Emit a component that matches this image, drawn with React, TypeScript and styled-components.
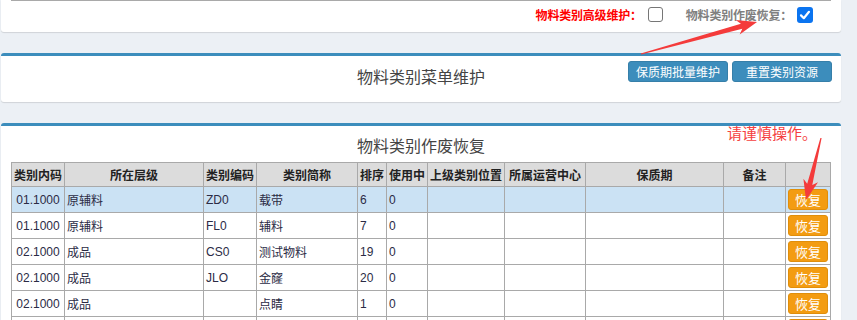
import React from "react";
import styled, { createGlobalStyle } from "styled-components";

const Global = createGlobalStyle`
  html, body { margin: 0; padding: 0; overflow: hidden; }
  body {
    background: #ecf0f5;
    font-family: "Liberation Sans", "Noto Sans CJK SC", sans-serif;
    color: #333;
  }
`;

const Page = styled.div`
  position: relative;
  width: 857px;
  height: 320px;
  overflow: hidden;
`;

const Column = styled.div`
  display: flex;
  flex-direction: column;
  gap: 21px;
  margin-left: 1px;
  width: 840px;
`;

const Box = styled.section<{ $top?: boolean }>`
  background: #fff;
  border-radius: 3px;
  box-shadow: 0 1px 1px rgba(0, 0, 0, 0.12);
  border-top: ${(p) => (p.$top ? "3px solid #3c8dbc" : "none")};
  box-sizing: border-box;
`;

const TopBox = styled(Box)`
  height: 32px;
  border-radius: 0 0 3px 3px;
  padding: 0 10px;
`;

const TableEdge = styled.div`
  height: 1px;
  background: #a9a9a9;
`;

const OptionRow = styled.div`
  display: flex;
  justify-content: flex-end;
  align-items: center;
  padding: 5px 18px 0 0;
  height: 17px;
`;

const OptionLabel = styled.label<{ $red?: boolean }>`
  display: flex;
  align-items: center;
  font-size: 12px;
  font-weight: bold;
  font-family: "Noto Sans CJK SC", sans-serif;
  letter-spacing: -0.2px;
  color: ${(p) => (p.$red ? "#ff0000" : "#808080")};
  margin-left: 23px;
`;

const Check = styled.span<{ $on?: boolean }>`
  display: inline-flex;
  align-items: center;
  justify-content: center;
  box-sizing: border-box;
  width: ${(p) => (p.$on ? "16px" : "15px")};
  height: ${(p) => (p.$on ? "16px" : "15px")};
  margin-left: ${(p) => (p.$on ? "5px" : "6px")};
  border-radius: 3px;
  border: ${(p) => (p.$on ? "none" : "1px solid #767676")};
  background: ${(p) => (p.$on ? "#0b74f0" : "#fff")};
`;

const MenuBox = styled(Box)`
  height: 49px;
  display: grid;
  grid-template-columns: 1fr auto 1fr;
  align-items: start;
`;

const Title = styled.h3<{ $pad: number }>`
  margin: 0;
  padding-top: ${(p) => p.$pad}px;
  font-size: 16px;
  font-weight: normal;
  color: #444;
  line-height: 18px;
  font-family: "Noto Sans CJK SC", sans-serif;
`;

const ButtonBar = styled.div`
  display: flex;
  justify-content: flex-end;
  gap: 4px;
  padding: 5px 9px 0 0;
`;

const BlueButton = styled.button`
  box-sizing: border-box;
  width: 100px;
  height: 21px;
  padding: 0;
  border: 1px solid #367fa9;
  border-radius: 3px;
  background: #3c8dbc;
  color: #fff;
  font-size: 12px;
  font-family: "Noto Sans CJK SC", sans-serif;
  line-height: 19px;
`;

const RecoverBox = styled(Box)`
  height: 260px;
  padding: 0 10px;
`;

const TitleRow = styled.div`
  height: 36px;
  display: flex;
  justify-content: center;
`;

const Grid = styled.table`
  width: 820px;
  border-collapse: collapse;
  table-layout: fixed;
  font-size: 12px;
`;

const Th = styled.th`
  height: 23px;
  padding: 0 1px;
  background: #dcdcdc;
  border: 1px solid #a9a9a9;
  font-weight: bold;
  color: #222;
  text-align: center;
  white-space: nowrap;
  overflow: hidden;
`;

const Tr = styled.tr<{ $sel?: boolean }>`
  background: ${(p) => (p.$sel ? "#cbe2f4" : "#fff")};
`;

const Td = styled.td<{ $center?: boolean }>`
  height: 25px;
  padding: 0 2px;
  border: 1px solid #a9a9a9;
  color: #2b2b45;
  text-align: ${(p) => (p.$center ? "center" : "left")};
  white-space: nowrap;
  overflow: hidden;
`;

const ActionTd = styled.td`
  height: 25px;
  padding: 0 0 0 2px;
  border: 1px solid #a9a9a9;
  vertical-align: middle;
`;

const OrangeButton = styled.button`
  display: block;
  box-sizing: border-box;
  width: 40px;
  height: 21px;
  padding: 0;
  border: 1px solid #e08e0b;
  border-radius: 3px;
  background: #f39c12;
  color: #fff;
  font-size: 13px;
  font-family: "Noto Sans CJK SC", sans-serif;
  line-height: 19px;
`;

const Warning = styled.div`
  position: absolute;
  left: 727px;
  top: 124px;
  font-size: 15px;
  line-height: 18px;
  color: #f54040;
  font-family: "Noto Sans CJK SC", sans-serif;
`;

const Overlay = styled.svg`
  position: absolute;
  left: 0;
  top: 0;
  pointer-events: none;
`;

function arrowPoints(tx: number, ty: number, px: number, py: number, head: number, barb: number) {
  const dx = px - tx;
  const dy = py - ty;
  const L = Math.hypot(dx, dy);
  const ux = dx / L;
  const uy = dy / L;
  const nx = -uy;
  const ny = ux;
  const at = (d: number, w: number) => `${(tx + ux * d + nx * w).toFixed(1)},${(ty + uy * d + ny * w).toFixed(1)}`;
  return [
    at(0, 0.6),
    at(L - head + 4, 2.6),
    at(L - head, barb),
    at(L, 0),
    at(L - head, -barb),
    at(L - head + 4, -2.6),
    at(0, -0.6),
  ].join(" ");
}

const cols = [53, 139, 53, 101, 29, 41, 77, 81, 138, 62, 45];
const headers = ["类别内码", "所在层级", "类别编码", "类别简称", "排序", "使用中", "上级类别位置", "所属运营中心", "保质期", "备注", ""];

const rows = [
  ["01.1000", "原辅料", "ZD0", "载带", "6", "0"],
  ["01.1000", "原辅料", "FL0", "辅料", "7", "0"],
  ["02.1000", "成品", "CS0", "测试物料", "19", "0"],
  ["02.1000", "成品", "JLO", "金窿", "20", "0"],
  ["02.1000", "成品", "", "点睛", "1", "0"],
];

export default function App() {
  return (
    <Page>
      <Global />
      <Column>
        <TopBox>
          <TableEdge />
          <OptionRow>
            <OptionLabel $red>
              物料类别高级维护：
              <Check />
            </OptionLabel>
            <OptionLabel>
              物料类别作废恢复：
              <Check $on>
                <svg width="12" height="12" viewBox="0 0 12 12">
                  <path d="M2 6.4 L4.8 9.2 L10 2.8" fill="none" stroke="#fff" strokeWidth="2.2" strokeLinecap="round" strokeLinejoin="round" />
                </svg>
              </Check>
            </OptionLabel>
          </OptionRow>
        </TopBox>

        <MenuBox $top>
          <div />
          <Title $pad={11}>物料类别菜单维护</Title>
          <ButtonBar>
            <BlueButton>保质期批量维护</BlueButton>
            <BlueButton>重置类别资源</BlueButton>
          </ButtonBar>
        </MenuBox>

        <RecoverBox $top>
          <TitleRow>
            <Title $pad={10}>物料类别作废恢复</Title>
          </TitleRow>
          <Grid>
            <colgroup>
              {cols.map((w, i) => (
                <col key={i} style={{ width: w }} />
              ))}
            </colgroup>
            <thead>
              <tr>
                {headers.map((h, i) => (
                  <Th key={i}>{h}</Th>
                ))}
              </tr>
            </thead>
            <tbody>
              {rows.map((r, i) => (
                <Tr key={i} $sel={i === 0}>
                  <Td $center>{r[0]}</Td>
                  <Td>{r[1]}</Td>
                  <Td>{r[2]}</Td>
                  <Td>{r[3]}</Td>
                  <Td>{r[4]}</Td>
                  <Td>{r[5]}</Td>
                  <Td />
                  <Td />
                  <Td />
                  <Td />
                  <ActionTd>
                    <OrangeButton>恢复</OrangeButton>
                  </ActionTd>
                </Tr>
              ))}
              <Tr>
                {cols.slice(0, 10).map((_, i) => (
                  <Td key={i} />
                ))}
                <ActionTd>
                  <OrangeButton aria-label="恢复" />
                </ActionTd>
              </Tr>
            </tbody>
          </Grid>
        </RecoverBox>
      </Column>

      <Warning>请谨慎操作。</Warning>

      <Overlay width="857" height="320" viewBox="0 0 857 320">
        <polygon points={arrowPoints(641, 54, 757, 22, 20, 7.5)} fill="#f43b3b" />
        <polygon points={arrowPoints(821, 138, 806, 200, 20, 7.5)} fill="#f43b3b" />
      </Overlay>
    </Page>
  );
}
